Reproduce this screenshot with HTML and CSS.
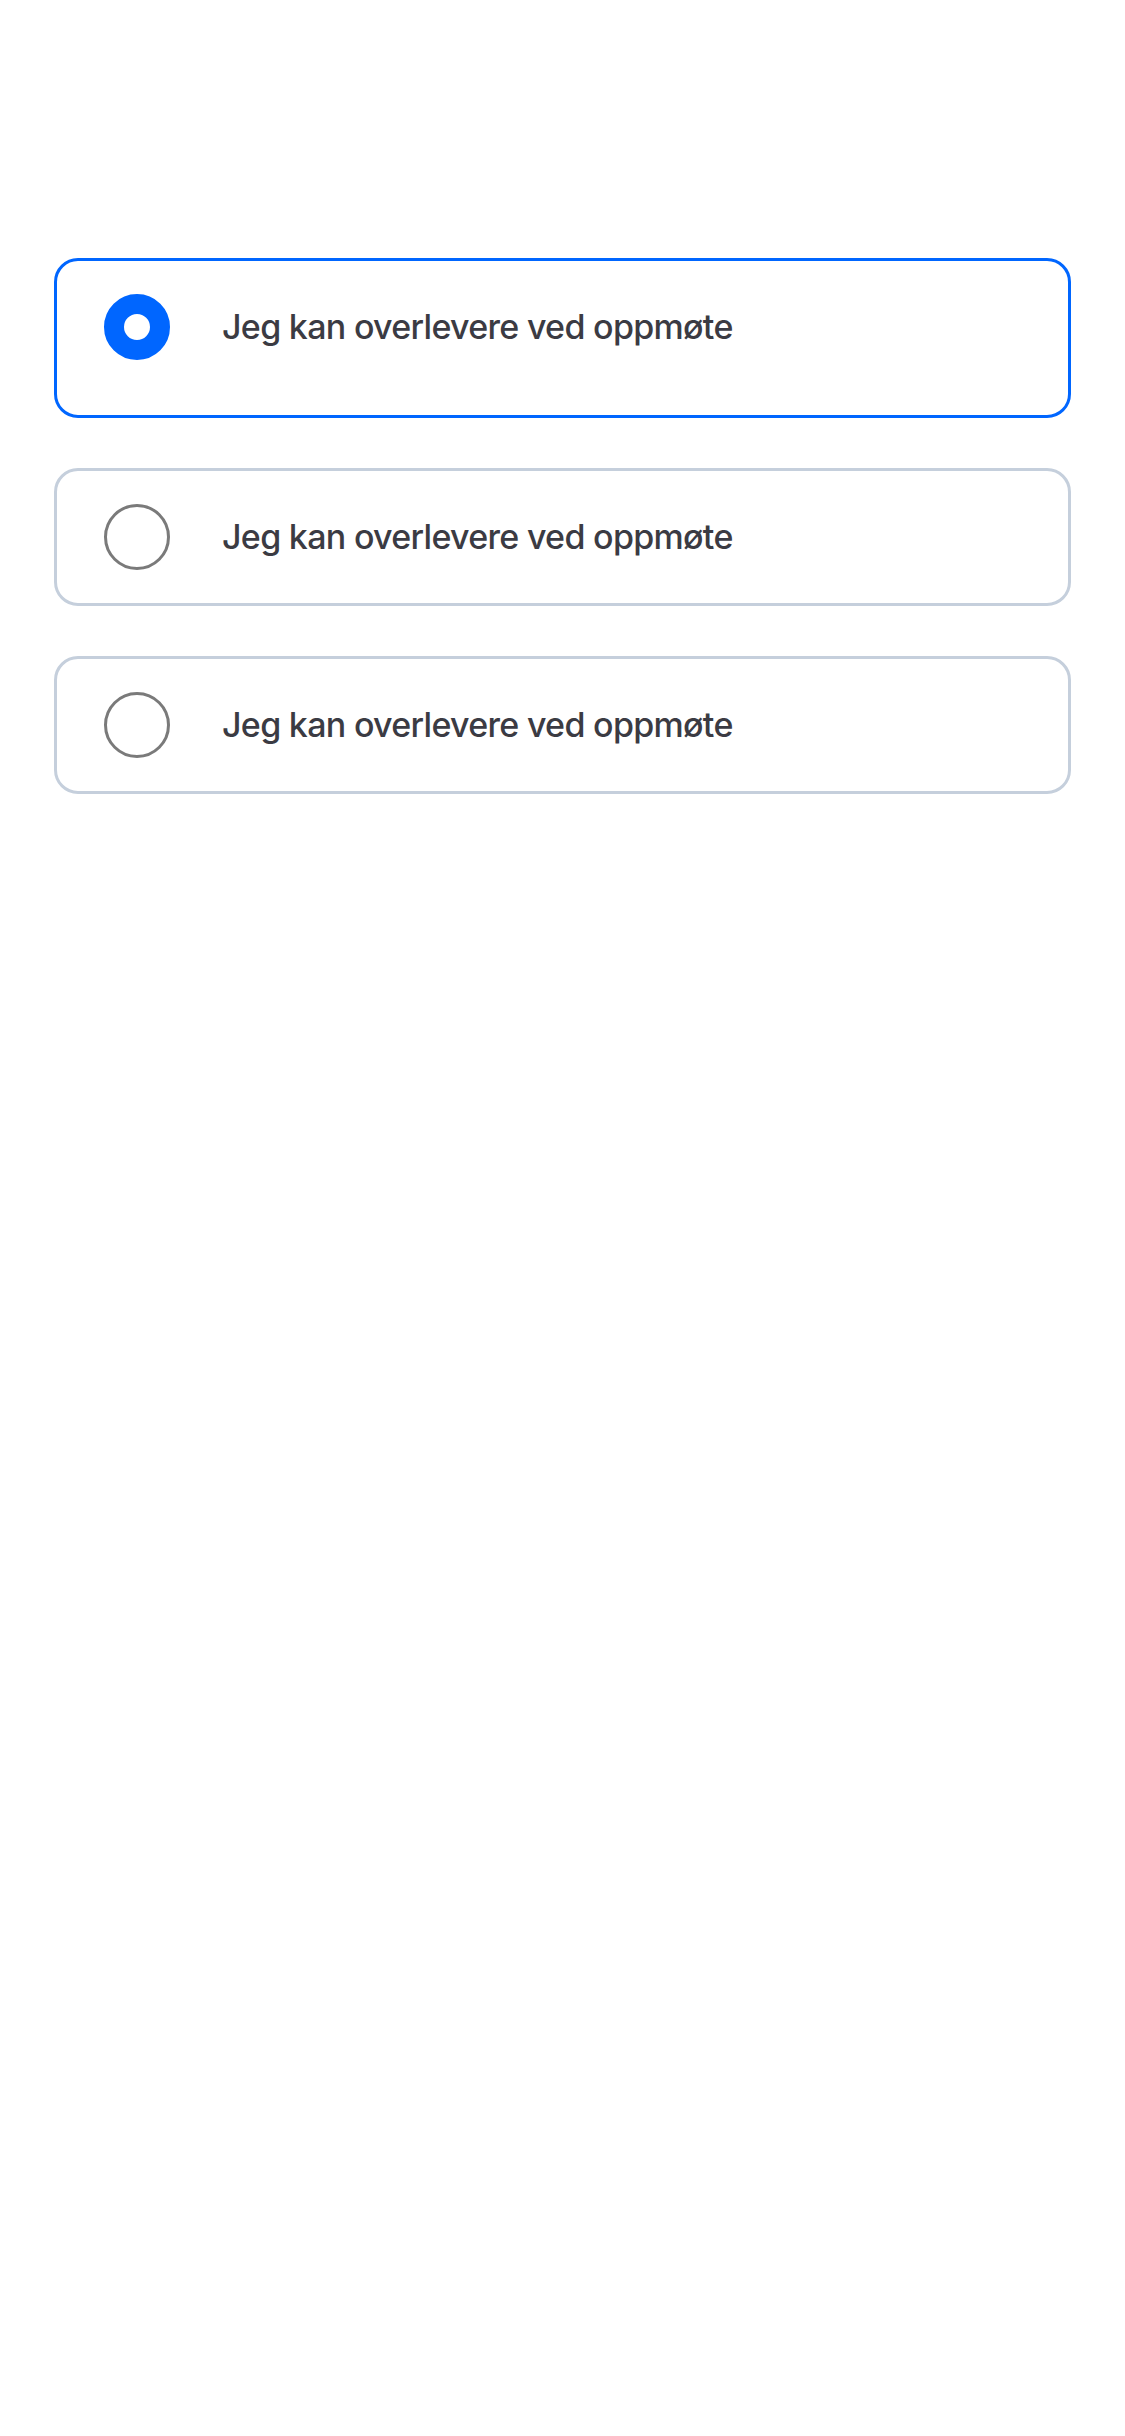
FILE: index.html
```html
<!DOCTYPE html>
<html lang="no">
<head>
<meta charset="utf-8">
<title>Valg</title>
<link rel="stylesheet" href="styles.css">
</head>
<body>
<main class="options">
  <label class="option option--selected">
    <span class="radio radio--on"></span>
    <span class="option-text">Jeg kan overlevere ved oppmøte</span>
  </label>
  <label class="option">
    <span class="radio"></span>
    <span class="option-text">Jeg kan overlevere ved oppmøte</span>
  </label>
  <label class="option">
    <span class="radio"></span>
    <span class="option-text">Jeg kan overlevere ved oppmøte</span>
  </label>
</main>
</body>
</html>
```
FILE: styles.css
```css
html, body {
  margin: 0;
  padding: 0;
  background: #ffffff;
}
body {
  font-family: Inter, "Open Sans", "Liberation Sans", sans-serif;
  width: 1125px;
  min-height: 2436px;
}
.options {
  display: flex;
  flex-direction: column;
  gap: 50px;
  padding: 258px 54px 0 54px;
}
.option {
  display: flex;
  align-items: center;
  gap: 52px;
  box-sizing: border-box;
  height: 138px;
  padding: 0 47px;
  border: 3px solid #c5cfdc;
  border-radius: 24px;
  background: #fff;
}
.option--selected {
  height: 160px;
  align-items: flex-start;
  padding-top: 33px;
  border-color: #0066ff;
}
.radio {
  flex: none;
  box-sizing: border-box;
  width: 66px;
  height: 66px;
  border-radius: 50%;
  border: 3px solid #7a7a7a;
  background: #fff;
}
.radio--on {
  border: 20px solid #0066ff;
  background: #fff;
}
.option-text {
  font-size: 34px;
  font-weight: 450;
  color: #3b3b43;
  line-height: 66px;
  letter-spacing: -0.7px;
}
```
